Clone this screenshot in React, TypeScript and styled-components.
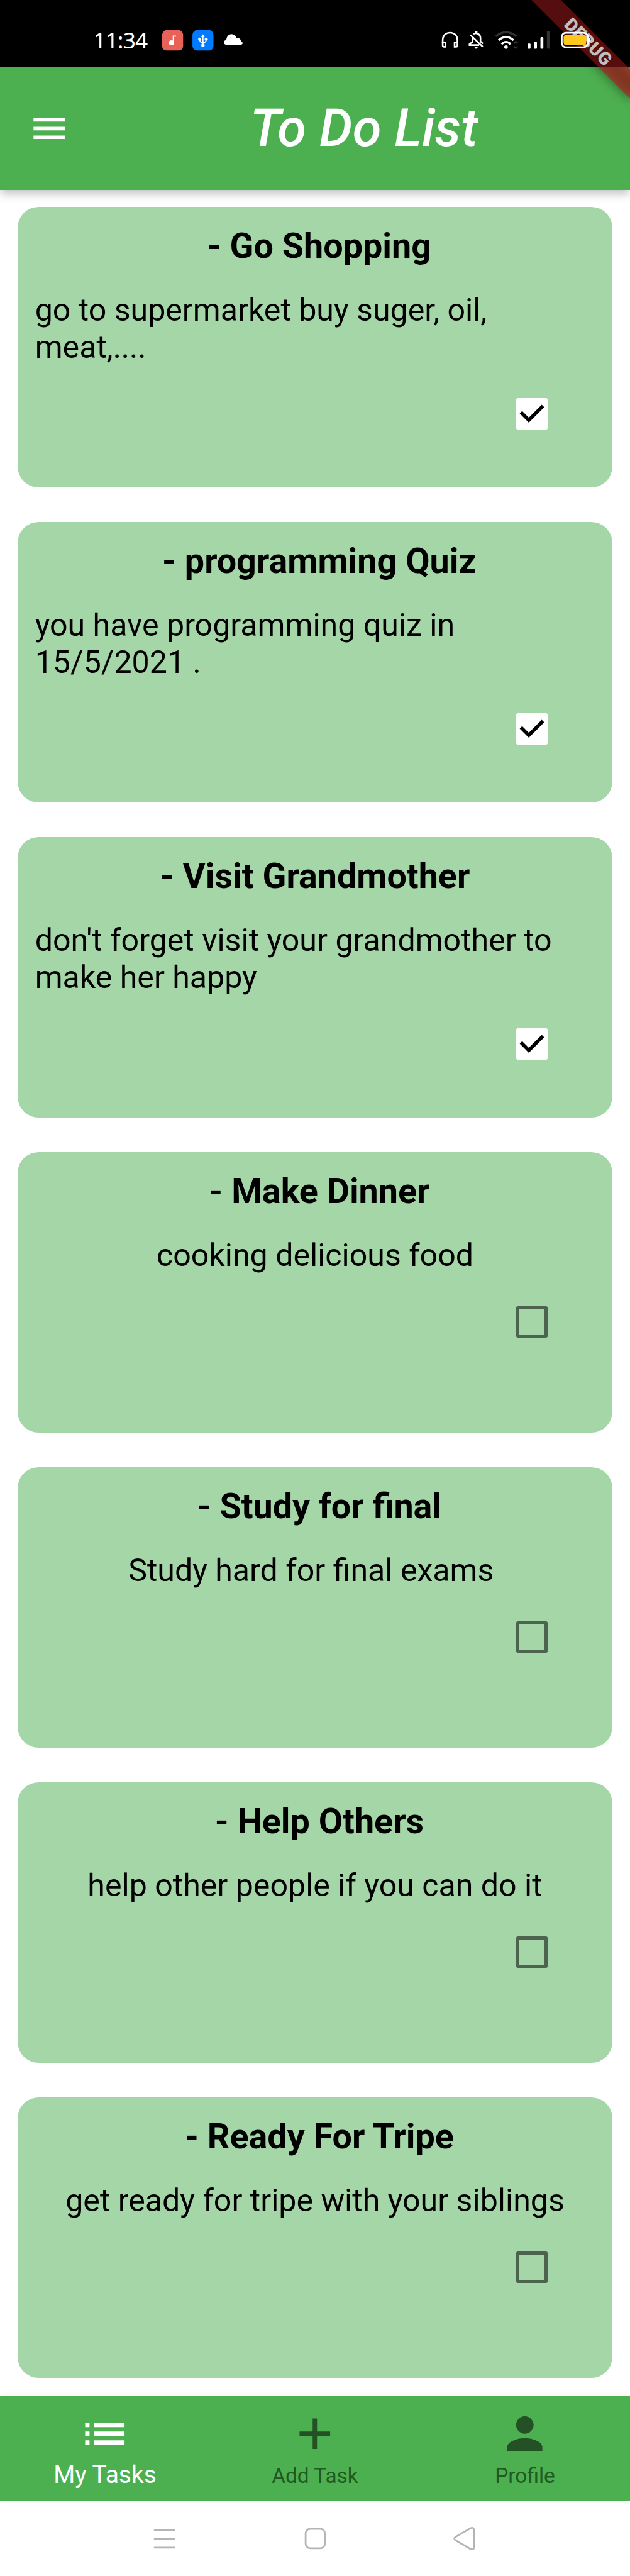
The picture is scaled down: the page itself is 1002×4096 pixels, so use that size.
import React from 'react';
import styled, { createGlobalStyle, css } from 'styled-components';

const SCALE = 1002 / 1080;
const u = (n: number) => `${(n * SCALE).toFixed(3)}px`;

const GlobalStyle = createGlobalStyle`
  html, body { margin: 0; padding: 0; background: #fff; }
  body { font-family: Roboto, "Liberation Sans", sans-serif; -webkit-font-smoothing: antialiased; }
`;

const Screen = styled.div`
  position: relative;
  display: flex;
  flex-direction: column;
  width: 1002px;
  height: 4096px;
  overflow: hidden;
  background: #fff;
`;

const StatusBackdrop = styled.div`
  height: ${u(115)};
  flex: none;
  background: #000;
`;

const StatusBar = styled.div`
  position: absolute;
  inset: 0 0 auto 0;
  z-index: 3;
  display: flex;
  justify-content: space-between;
  box-sizing: border-box;
  height: ${u(115)};
  padding: ${u(50)} ${u(66)} 0 ${u(160)};
  background: rgba(0, 0, 0, 0.25);
`;

const StatusGroup = styled.div`
  display: flex;
  align-items: flex-start;
`;

const Clock = styled.span`
  width: ${u(116)};
  margin-top: ${u(-1)};
  font-family: "Noto Sans", sans-serif;
  font-size: ${u(38)};
  line-height: ${u(39)};
  letter-spacing: ${u(-0.9)};
  color: #fff;
`;

const Glyphs = styled.svg<{ $w: number; $h: number }>`
  display: block;
  flex: none;
  width: ${(p) => u(p.$w)};
  height: ${(p) => u(p.$h)};
`;

const Header = styled.header`
  position: relative;
  z-index: 1;
  display: flex;
  align-items: center;
  flex: none;
  box-sizing: border-box;
  height: ${u(210)};
  padding-left: ${u(48)};
  background: #4caf50;
  box-shadow: 0 ${u(7)} ${u(15)} ${u(-1)} rgba(0, 0, 0, 0.25);
`;

const Title = styled.h1`
  flex: 1;
  margin: 0;
  padding-left: ${u(48)};
  text-align: center;
  font-size: ${u(90)};
  line-height: ${u(106)};
  font-style: italic;
  font-weight: 500;
  color: #fff;
`;

const Icon = styled.svg<{ $size: number }>`
  display: block;
  flex: none;
  width: ${(p) => u(p.$size)};
  height: ${(p) => u(p.$size)};
  fill: currentColor;
`;

const HeaderIcon = styled(Icon)`
  color: #fff;
`;

const RibbonArea = styled.div`
  position: absolute;
  top: 0;
  right: 0;
  z-index: 2;
  width: ${u(240)};
  height: ${u(240)};
  overflow: hidden;
`;

const Ribbon = styled.div`
  position: absolute;
  left: ${u(120)};
  top: ${u(84)};
  width: ${u(240)};
  height: ${u(36)};
  transform-origin: 50% ${u(-84)};
  transform: rotate(45deg);
  color: #fff;
  text-align: center;
  font-size: ${u(30.6)};
  line-height: ${u(36)};
  font-weight: 900;
  letter-spacing: ${u(0.6)};

  &::before,
  &::after {
    content: '';
    position: absolute;
    inset: 0;
    z-index: -1;
  }

  &::before {
    background: rgba(0, 0, 0, 0.5);
    filter: blur(${u(10)});
  }

  &::after {
    background: rgba(183, 28, 28, 0.627);
  }
`;

const TaskList = styled.main`
  display: flex;
  flex-direction: column;
  gap: ${u(60)};
  flex: none;
  box-sizing: border-box;
  height: ${u(3780)};
  padding: ${u(30)} ${u(30)} 0;
`;

const Card = styled.article`
  display: flex;
  flex-direction: column;
  align-items: center;
  flex: none;
  box-sizing: border-box;
  height: ${u(480)};
  padding: ${u(32)} ${u(30)} 0;
  border-radius: ${u(36)};
  background: #a5d6a7;
  color: #000;
`;

const CardTitle = styled.h2`
  margin: 0;
  font-size: ${u(60)};
  line-height: ${u(70)};
  font-weight: 700;
  white-space: pre;
`;

const CardText = styled.p`
  margin: ${u(43)} 0 0;
  font-size: ${u(54)};
  line-height: ${u(63.3)};
`;

const CheckRow = styled.div`
  display: flex;
  justify-content: flex-end;
  align-self: stretch;
  padding: ${u(55.5)} ${u(81)} 0 0;
`;

const CheckBox = styled.span<{ $done: boolean }>`
  box-sizing: border-box;
  width: ${u(54)};
  height: ${u(54)};
  border-radius: ${u(3)};
  ${(p) =>
    p.$done
      ? css`
          background: #fff;
        `
      : css`
          border: ${u(6)} solid #4c634d;
        `}
`;

const BottomNav = styled.nav`
  position: relative;
  display: grid;
  grid-template-columns: repeat(3, 1fr);
  flex: none;
  height: ${u(180)};
  background: #4caf50;
  box-shadow: 0 0 ${u(12)} rgba(0, 0, 0, 0.06);
`;

const NavItem = styled.div<{ $active: boolean }>`
  display: flex;
  flex-direction: column;
  align-items: center;
  padding-top: ${u(21)};
  color: ${(p) => (p.$active ? '#fff' : '#235024')};
`;

const NavLabel = styled.span<{ $active: boolean }>`
  margin-top: ${(p) => u(p.$active ? 1.5 : 4)};
  font-size: ${(p) => u(p.$active ? 42 : 36)};
  line-height: ${u(48)};
  color: ${(p) => (p.$active ? '#fff' : '#1f5a22')};
`;

const SystemNav = styled.div`
  display: flex;
  align-items: flex-start;
  gap: ${u(215)};
  flex: 1;
  box-sizing: border-box;
  padding: ${u(45)} 0 0 ${u(261)};
  background: #fff;
`;

const SystemIcon = styled(Icon)`
  fill: none;
  stroke: #b5b5b5;
  stroke-width: 3;
  stroke-linejoin: round;
`;

const tasks = [
  { title: ' - Go Shopping', text: 'go to supermarket buy suger, oil, meat,....', done: true },
  { title: ' - programming Quiz', text: 'you have programming quiz in 15/5/2021 .', done: true },
  { title: '- Visit Grandmother', text: "don't forget visit your grandmother to make her happy", done: true },
  { title: ' - Make Dinner', text: 'cooking delicious food', done: false },
  { title: ' - Study for final', text: 'Study hard for final exams\u00a0', done: false },
  { title: ' - Help Others', text: 'help other people if you can do it', done: false },
  { title: ' - Ready For Tripe', text: 'get ready for tripe with your siblings', done: false },
];

const navItems = [
  { label: 'My Tasks', path: 'M3 13h2v-2H3v2zm0 4h2v-2H3v2zm0-8h2V7H3v2zm4 4h14v-2H7v2zm0 4h14v-2H7v2zM7 7v2h14V7H7z' },
  { label: 'Add Task', path: 'M19 13h-6v6h-2v-6H5v-2h6V5h2v6h6v2z' },
  {
    label: 'Profile',
    path: 'M12 12c2.21 0 4-1.79 4-4s-1.79-4-4-4-4 1.79-4 4 1.79 4 4 4zm0 2c-2.67 0-8 1.34-8 4v2h16v-2c0-2.66-5.33-4-8-4z',
  },
];

const AppBadges = () => (
  <Glyphs $w={144} $h={40} viewBox="276 50 144 40">
    <rect x="278" y="52" width="36" height="35" rx="8" fill="#e96258" />
    <circle cx="294" cy="73.7" r="4.4" fill="#fff" />
    <path d="M297.2 74V62.2H301.8" fill="none" stroke="#fff" strokeWidth="2" />
    <rect x="330" y="52" width="36" height="35" rx="8" fill="#007aff" />
    <path d="M348 63V77M342.3 67C342.3 72 345 73.6 348 73.6S353.7 72 353.7 67" fill="none" stroke="#fff" strokeWidth="1.9" />
    <path d="M348 58.8L351 64H345Z" fill="#fff" />
    <circle cx="342.4" cy="67.4" r="2.6" fill="#fff" />
    <circle cx="353.6" cy="67.4" r="2.6" fill="#fff" />
    <circle cx="348" cy="78" r="2.9" fill="#fff" />
    <path
      d="M388 77C385.500 77 384 75.300 384 73C384 70.700 385.600 69.200 388 68.800C388.700 63 392 59 397 59C401 59 404 61.300 405.400 65C409.800 64.600 413 67.300 413.200 71.300C415 71.800 416 73 416 74.300C416 76 414.800 77 413 77Z"
      fill="#fff"
    />
  </Glyphs>
);

const SystemStatus = () => (
  <Glyphs $w={260} $h={38} viewBox="754 50 260 38">
    <g fill="none" stroke="#fff" strokeWidth="2.800">
      <path d="M758.400 74V69.500C758.400 61.500 763.600 56.400 771 56.400S783.600 61.500 783.600 69.500V74" />
      <path d="M758.400 73.400H763.200V80.600H760.400Q758.400 80.600 758.400 78.600Z" />
      <path d="M783.600 73.400H778.800V80.600H781.600Q783.600 80.600 783.600 78.600Z" />
      <path d="M806 60.500L827 80.500" />
      <path d="M809.300 65.500V72.500L804.400 76V77.600H821" />
      <path d="M811 58.800C815.500 55.500 823.200 58.500 823.200 66V71.500L827.500 75.200" />
    </g>
    <path d="M814 54H818V57H814ZM812.800 81H818.600Q818 84 815.700 84T812.800 81Z" fill="#fff" />
    <g fill="none" strokeWidth="3.600">
      <path d="M849.500 62.500Q867 49 884.500 62.500" stroke="#333" />
      <path d="M854.200 69.500Q867 58 879.800 69.500" stroke="#fff" />
      <path d="M859.200 76Q867 68.500 874.800 76" stroke="#fff" />
    </g>
    <circle cx="867" cy="81" r="3.100" fill="#fff" />
    <path d="M880.500 75L883.800 71.700L887.100 75M880.500 79.800L883.800 83L887.100 79.800" fill="none" stroke="#333" strokeWidth="2.600" />
    <rect x="904" y="75" width="5" height="9" rx="1.500" fill="#fff" />
    <rect x="915" y="72" width="5" height="12" rx="1.500" fill="#fff" />
    <rect x="926" y="64" width="5" height="20" rx="1.500" fill="#fff" />
    <rect x="937" y="54" width="5" height="30" rx="1.500" fill="#333" />
    <rect x="962.500" y="56.500" width="44.500" height="25" rx="7.500" fill="none" stroke="#fff" strokeWidth="3" />
    <path d="M1008 64.500Q1011.300 65.500 1011.300 69T1008 73.500Z" fill="#fff" />
    <rect x="965.700" y="60" width="38.800" height="18" rx="4.500" fill="#ffc91c" />
  </Glyphs>
);

export default function App() {
  return (
    <Screen>
      <GlobalStyle />
      <StatusBackdrop />
      <Header>
        <HeaderIcon $size={72} viewBox="0 0 24 24">
          <path d="M3 18h18v-2H3v2zm0-5h18v-2H3v2zm0-7v2h18V6H3z" />
        </HeaderIcon>
        <Title>To Do List</Title>
      </Header>
      <TaskList>
        {tasks.map((t) => (
          <Card key={t.title}>
            <CardTitle>{t.title}</CardTitle>
            <CardText>{t.text}</CardText>
            <CheckRow>
              <CheckBox $done={t.done}>
                {t.done && (
                  <Icon $size={54} viewBox="0 0 54 54">
                    <path d="M8.100 24.300L21.600 37.800L45.900 13.500" fill="none" stroke="#000" strokeWidth="6" />
                  </Icon>
                )}
              </CheckBox>
            </CheckRow>
          </Card>
        ))}
      </TaskList>
      <BottomNav>
        {navItems.map((item, i) => (
          <NavItem key={item.label} $active={i === 0}>
            <Icon $size={90} viewBox="0 0 24 24">
              <path d={item.path} />
            </Icon>
            <NavLabel $active={i === 0}>{item.label}</NavLabel>
          </NavItem>
        ))}
      </BottomNav>
      <SystemNav>
        <SystemIcon $size={42} viewBox="0 0 42 42">
          <path d="M3 6.500H39M3 21.500H39M3 36.500H39" />
        </SystemIcon>
        <SystemIcon $size={42} viewBox="0 0 42 42">
          <rect x="5.500" y="4.500" width="33" height="33" rx="7.500" />
        </SystemIcon>
        <SystemIcon $size={42} viewBox="0 0 42 42">
          <path d="M5.500 18.500L32 3Q37.500 1 37.500 6.500V36Q37.500 41 32 39L5.500 23.700Q2.500 21 5.500 18.500Z" />
        </SystemIcon>
      </SystemNav>
      <RibbonArea>
        <Ribbon>DEBUG</Ribbon>
      </RibbonArea>
      <StatusBar>
        <StatusGroup>
          <Clock>11:34</Clock>
          <AppBadges />
        </StatusGroup>
        <SystemStatus />
      </StatusBar>
    </Screen>
  );
}
